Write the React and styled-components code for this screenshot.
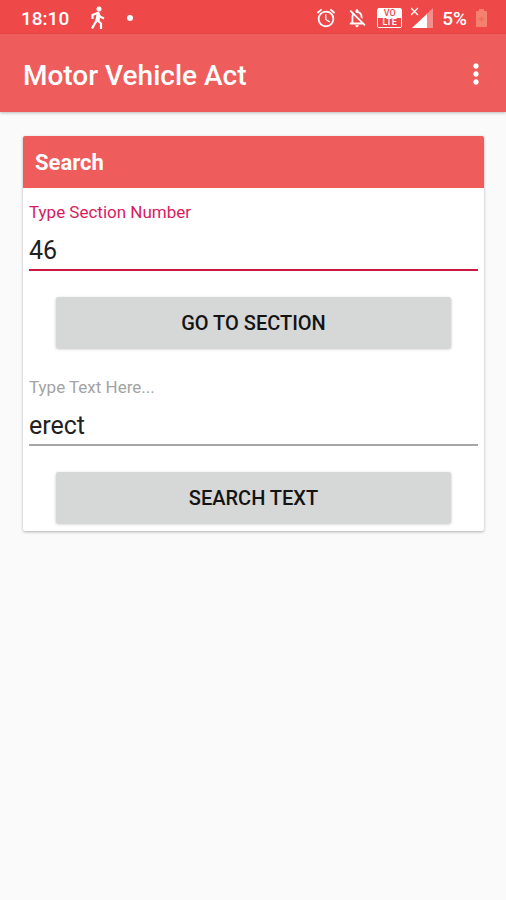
import React, { useState } from 'react';
import styled, { createGlobalStyle } from 'styled-components';
import { MdAlarm, MdMoreVert, MdOutlineNotificationsOff } from 'react-icons/md';

const GlobalStyle = createGlobalStyle`
    * {
        box-sizing: border-box;
    }

    body {
        margin: 0;
        background-color: #fafafa;
        font-family: Roboto, "Liberation Sans", sans-serif;
    }
`;

const StatusBar = styled.div`
    display: flex;
    justify-content: space-between;
    align-items: center;
    height: 34px;
    padding: 2px 19px 0 21px;
    background-color: #ef4848;
    color: #fff;
    font-size: 19px;
    font-weight: 500;
`;

const StatusGroup = styled.div`
    display: flex;
    align-items: center;
    gap: ${({ $gap }) => $gap}px;

    svg {
        display: block;
    }
`;

const Dot = styled.span`
    width: 6px;
    height: 6px;
    border-radius: 50%;
    background-color: #fff;
`;

const VolteBadge = styled.span`
    display: flex;
    flex-direction: column;
    width: 25px;
    border: 1px solid #fff;
    border-radius: 2px;
    background-color: #fff;
    font-size: 9px;
    font-weight: 500;
    line-height: 9px;
    text-align: center;
`;

const VolteLine = styled.span`
    background-color: ${({ $filled }) => ($filled ? '#ef4848' : '#fff')};
    color: ${({ $filled }) => ($filled ? '#fff' : '#ef4848')};
`;

const AppBar = styled.header`
    display: flex;
    justify-content: space-between;
    align-items: center;
    height: 78px;
    padding: 5px 14px 0 23px;
    background-color: #ef5c5c;
    box-shadow: 0 1px 3px rgba(0, 0, 0, 0.25);
    color: #fff;
`;

const Title = styled.h1`
    margin: 0;
    font-size: 28px;
    font-weight: 500;
    line-height: 32px;
`;

const MenuButton = styled.button`
    display: flex;
    padding: 0 0 4px;
    border: none;
    background: none;
    color: #fff;
    font-size: 32px;
    cursor: pointer;
`;

const Main = styled.main`
    padding: 24px 22px 24px 23px;
`;

const Card = styled.section`
    padding-bottom: 8px;
    border-radius: 2px;
    background-color: #fff;
    box-shadow: 0 1px 3px rgba(0, 0, 0, 0.3);
    overflow: hidden;
`;

const CardTitle = styled.h2`
    margin: 0;
    padding: 2px 12px 0;
    background-color: #ef5c5c;
    color: #fff;
    font-size: 22px;
    font-weight: 700;
    line-height: 50px;
`;

const Form = styled.form`
    padding: 12px 6px 0;

    & + & {
        padding-top: 27px;
    }
`;

const Label = styled.label`
    display: block;
    color: ${({ $active }) => ($active ? '#d81b60' : '#a3a3a3')};
    font-size: 17px;
    line-height: 24px;
`;

const Input = styled.input`
    display: block;
    width: 100%;
    height: 47px;
    padding: 8px 0 0;
    border: none;
    border-bottom: 2px solid ${({ $active }) => ($active ? '#cc1742' : '#a6a6a6')};
    border-radius: 0;
    outline: none;
    background: none;
    color: #212121;
    font-family: inherit;
    font-size: 25px;
`;

const ButtonRow = styled.div`
    padding: 26px 27px 0;
`;

const Button = styled.button`
    display: block;
    width: 100%;
    height: 51px;
    padding: 1px 0 0;
    border: none;
    border-radius: 2px;
    background-color: #d6d7d7;
    box-shadow: 0 1px 3px rgba(0, 0, 0, 0.25);
    color: #141414;
    font-family: inherit;
    font-size: 20px;
    font-weight: 500;
    cursor: pointer;
`;

const WalkIcon = () => (
    <svg width="16" height="24" viewBox="0 0 16 24" aria-hidden="true">
        <circle cx="9" cy="3" r="2.5" fill="#fff" />
        <path
            d="M2.5 13V9L8 6.8L9.8 10.5L14 12.5M8 7.5L6.3 15L2 22.5M6.8 14L11 17.5V23"
            fill="none"
            stroke="#fff"
            strokeWidth="2.2"
        />
        <path d="M7 6.5h2.5l1 4-1 4.5H5.5z" fill="#fff" />
    </svg>
);

const SignalIcon = () => (
    <svg width="22" height="22" viewBox="0 0 22 22" aria-hidden="true">
        <path d="M22 1v20H1z" fill="#f58d8d" />
        <path d="M16 7v14H1z" fill="#fff" />
        <path d="M0 1l7 7M7 1L0 8" stroke="#fff" strokeWidth="1.3" />
    </svg>
);

const BatteryIcon = () => (
    <svg width="11" height="20" viewBox="0 0 11 20" aria-hidden="true">
        <path d="M3 1h5v2h2q1 0 1 1v14q0 1-1 1H1q-1 0-1-1V4q0-1 1-1h2z" fill="#f5806e" />
        <path d="M3 11h5M5.5 8.5v5" stroke="#f26a5e" strokeWidth="1.5" />
    </svg>
);

const App = () => {
    const [section, setSection] = useState('46');
    const [text, setText] = useState('erect');

    const onSubmit = (e) => e.preventDefault();

    return (
        <>
            <GlobalStyle />
            <StatusBar>
                <StatusGroup $gap={21}>
                    <span>18:10</span>
                    <WalkIcon />
                    <Dot />
                </StatusGroup>
                <StatusGroup $gap={9}>
                    <MdAlarm size={22} />
                    <MdOutlineNotificationsOff size={22} />
                    <VolteBadge>
                        <VolteLine>VO</VolteLine>
                        <VolteLine $filled>LTE</VolteLine>
                    </VolteBadge>
                    <SignalIcon />
                    <span>5%</span>
                    <BatteryIcon />
                </StatusGroup>
            </StatusBar>
            <AppBar>
                <Title>Motor Vehicle Act</Title>
                <MenuButton aria-label="More options">
                    <MdMoreVert />
                </MenuButton>
            </AppBar>
            <Main>
                <Card>
                    <CardTitle>Search</CardTitle>
                    <Form onSubmit={onSubmit}>
                        <Label htmlFor="section" $active>Type Section Number</Label>
                        <Input
                            id="section"
                            inputMode="numeric"
                            $active
                            value={section}
                            onChange={(e) => setSection(e.target.value)}
                        />
                        <ButtonRow>
                            <Button type="submit">GO TO SECTION</Button>
                        </ButtonRow>
                    </Form>
                    <Form onSubmit={onSubmit}>
                        <Label htmlFor="text">Type Text Here...</Label>
                        <Input id="text" value={text} onChange={(e) => setText(e.target.value)} />
                        <ButtonRow>
                            <Button type="submit">SEARCH TEXT</Button>
                        </ButtonRow>
                    </Form>
                </Card>
            </Main>
        </>
    );
};

export default App;
